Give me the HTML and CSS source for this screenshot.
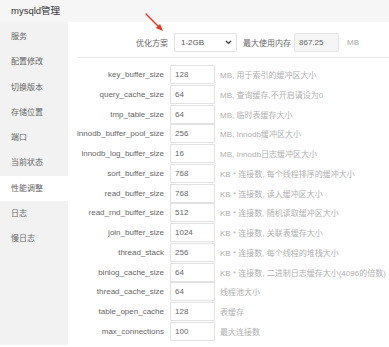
FILE: index.html
```html
<!DOCTYPE html>
<html lang="zh">
<head>
    <meta charset="UTF-8">
    <meta name="viewport" content="width=device-width, initial-scale=1.0">
    <title>mysqld管理</title>
    <link rel="stylesheet" href="styles.css">
</head>
<body>
    <div class="page">
        <div class="header">mysqld管理</div>

        <div class="layout">
            <ul class="side-menu">
                <li>服务</li>
                <li>配置修改</li>
                <li>切换版本</li>
                <li>存储位置</li>
                <li>端口</li>
                <li>当前状态</li>
                <li class="active">性能调整</li>
                <li>日志</li>
                <li>慢日志</li>
            </ul>

            <div class="main">
                <div class="plan-row">
                    <span class="plan-label">优化方案</span>
                    <div class="fake-select">
                        <span>1-2GB</span>
                        <svg class="chevron" width="7" height="5" viewBox="0 0 7 5">
                            <path d="M1 1 L3.5 3.5 L6 1" fill="none" stroke="#333" stroke-width="1.2"/>
                        </svg>
                    </div>
                    <span class="mem-label">最大使用内存</span>
                    <input class="mem-input" type="text" value="867.25" readonly>
                    <span class="unit">MB</span>
                </div>

                <div class="params">
                    <label>key_buffer_size</label><input type="text" value="128"><span class="desc">MB, 用于索引的缓冲区大小</span>
                    <label>query_cache_size</label><input type="text" value="64"><span class="desc">MB, 查询缓存,不开启请设为0</span>
                    <label>tmp_table_size</label><input type="text" value="64"><span class="desc">MB, 临时表缓存大小</span>
                    <label>innodb_buffer_pool_size</label><input type="text" value="256"><span class="desc">MB, Innodb缓冲区大小</span>
                    <label>innodb_log_buffer_size</label><input type="text" value="16"><span class="desc">MB, Innodb日志缓冲区大小</span>
                    <label>sort_buffer_size</label><input type="text" value="768"><span class="desc">KB * 连接数, 每个线程排序的缓冲大小</span>
                    <label>read_buffer_size</label><input type="text" value="768"><span class="desc">KB * 连接数, 读入缓冲区大小</span>
                    <label>read_rnd_buffer_size</label><input type="text" value="512"><span class="desc">KB * 连接数, 随机读取缓冲区大小</span>
                    <label>join_buffer_size</label><input type="text" value="1024"><span class="desc">KB * 连接数, 关联表缓存大小</span>
                    <label>thread_stack</label><input type="text" value="256"><span class="desc">KB * 连接数, 每个线程的堆栈大小</span>
                    <label>binlog_cache_size</label><input type="text" value="64"><span class="desc">KB * 连接数, 二进制日志缓存大小(4096的倍数)</span>
                    <label>thread_cache_size</label><input type="text" value="64"><span class="desc">线程池大小</span>
                    <label>table_open_cache</label><input type="text" value="128"><span class="desc">表缓存</span>
                    <label>max_connections</label><input type="text" value="100"><span class="desc">最大连接数</span>
                </div>
            </div>
        </div>

        <svg class="arrow" width="26" height="24" viewBox="0 0 26 24">
            <line x1="6" y1="4" x2="18.5" y2="16.5" stroke="#f0301c" stroke-width="1.4" stroke-linecap="round"/>
            <polygon points="23,21 15.9,18.1 20.1,13.9" fill="#f0301c"/>
        </svg>
    </div>
</body>
</html>
```

FILE: styles.css
```css
* {
    margin: 0;
    padding: 0;
    box-sizing: border-box;
}

body {
    font-family: "Liberation Sans", "Noto Sans CJK SC", sans-serif;
    font-size: 8px;
    color: #666;
    background: white;
}

.page {
    position: relative;
    width: 389px;
    height: 347px;
    overflow: hidden;
}

.header {
    height: 22px;
    line-height: 22px;
    padding-left: 11px;
    background: #f6f6f6;
    color: #333;
    font-size: 9.5px;
}

.layout {
    display: flex;
}

.side-menu {
    list-style: none;
    width: 68px;
    height: 323px;
    padding-top: 2px;
    background: #f2f2f2;
}

.side-menu li {
    height: 25.3px;
    line-height: 25.3px;
    padding-left: 11px;
    color: #666;
}

.side-menu li.active {
    background: white;
}

.main {
    flex: 1;
    padding: 11px 0 0 9px;
}

.plan-row {
    display: flex;
    align-items: center;
    height: 19px;
}

.plan-label {
    width: 91px;
    text-align: right;
    margin-right: 6px;
}

.fake-select {
    display: flex;
    align-items: center;
    justify-content: space-between;
    width: 63px;
    height: 19px;
    padding: 0 4px 0 6px;
    border: 1px solid #e2e2e2;
    border-radius: 2px;
    color: #555;
}

.chevron {
    display: block;
}

.mem-label {
    margin-left: 6px;
    width: 51px;
}

.mem-input {
    width: 45px;
    height: 19px;
    padding-left: 4px;
    border: 1px solid #e6e6e6;
    border-radius: 2px;
    background: #f5f5f5;
    font: inherit;
    color: #666;
}

.unit {
    margin-left: 8px;
    color: #aaa;
}

.params {
    display: grid;
    grid-template-columns: 93px 45px auto;
    grid-auto-rows: 19px;
    row-gap: 0.75px;
    align-items: center;
    margin-top: 4.5px;
    padding-top: 7.5px;
    border-top: 1px solid #e8e8e8;
}

.params label {
    grid-column: 1;
    text-align: right;
    margin-right: 6px;
    white-space: nowrap;
    color: #666;
}

.params input {
    width: 45px;
    height: 19px;
    padding-left: 4px;
    border: 1px solid #e2e2e2;
    font: inherit;
    color: #666;
    background: white;
}

.desc {
    margin-left: 5px;
    color: #b0b0b0;
    white-space: nowrap;
}

.arrow {
    position: absolute;
    left: 140px;
    top: 10px;
}
```
